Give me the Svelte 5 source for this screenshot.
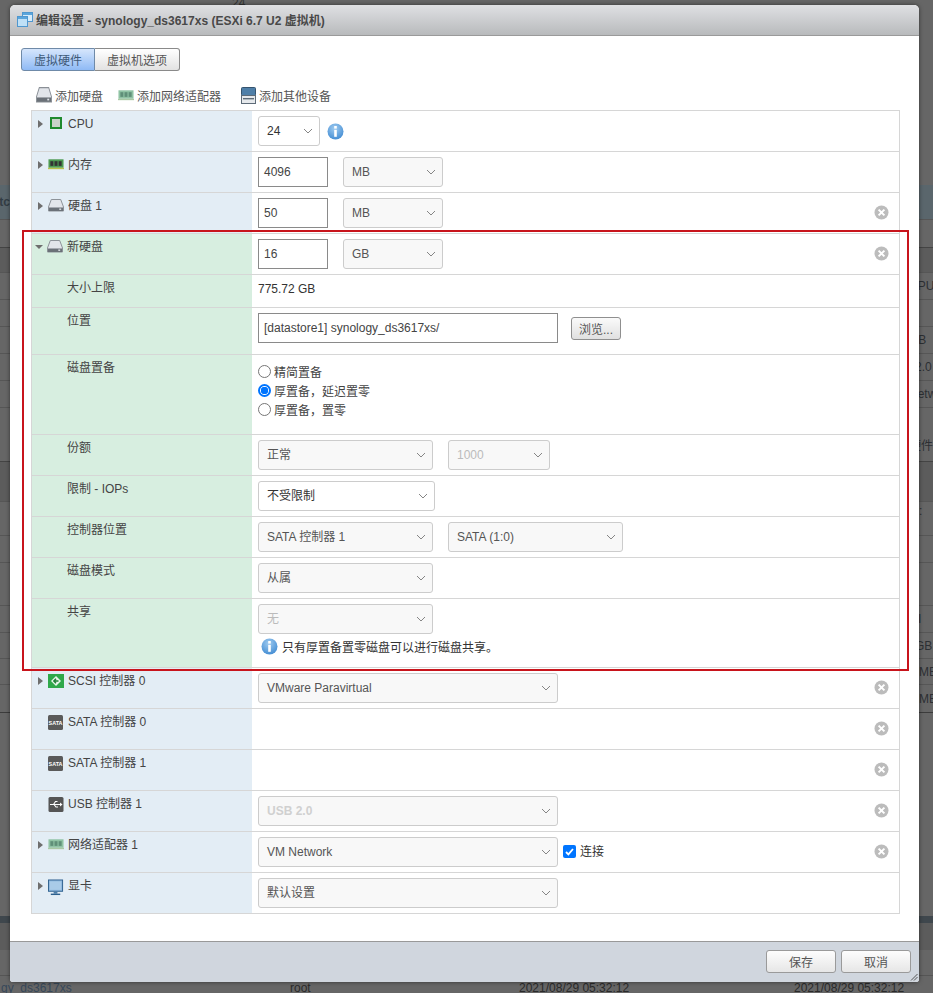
<script>
  const bgRows = [
    { h: 14, top: '24' },
    { h: 171 },
    { h: 34, l: 'ftc', cls: 'band' },
    { h: 28, cls: 'line' },
    { h: 25, cls: 'line dim' },
    { h: 27, r: 'CPU', cls: 'line' },
    { h: 27, cls: 'line' },
    { h: 27, r: 'IB', o: 6, cls: 'line' },
    { h: 27, r: '2.0', o: 6, cls: 'line' },
    { h: 27, r: 'Network', cls: 'line' },
    { h: 20, cls: 'line' },
    { h: 34, r: '硬件' },
    { h: 40, cls: 'line dim' },
    { h: 18, r: ':', o: 10, cls: 'line' },
    { h: 16 },
    { h: 27, cls: 'line' },
    { h: 43, cls: 'line' },
    { h: 27, r: 'I', o: 9, cls: 'line' },
    { h: 26, r: 'GB', o: 6, cls: 'line' },
    { h: 26, r: 'MB', o: 10, cls: 'line' },
    { h: 28, r: 'MB', o: 10, cls: 'line' },
    { h: 204, cls: 'line dark' },
    { h: 7, cls: 'strip' },
    { h: 27, cls: 'dim' },
    { h: 25 }
  ];

  const hw = ['添加硬盘', '添加网络适配器', '添加其他设备'];
</script>

{#snippet chev()}
  <svg class="chev" width="12" height="8" viewBox="0 0 12 8"><path d="M2 2l4 4 4-4" fill="none" stroke="#858585" stroke-width="1"/></svg>
{/snippet}

{#snippet sel(text, w, cls = '')}
  <span class="select {cls}" style="width:{w}px"><span>{text}</span>{@render chev()}</span>
{/snippet}

{#snippet info()}
  <svg width="17" height="17" viewBox="0 0 17 17">
    <defs><radialGradient id="ig" cx="45%" cy="30%" r="75%"><stop offset="0" stop-color="#9fcbf0"/><stop offset="1" stop-color="#3f8ad2"/></radialGradient></defs>
    <circle cx="8.5" cy="8.5" r="8" fill="url(#ig)"/>
    <rect x="7.2" y="3" width="2.6" height="2.6" fill="#fff"/>
    <rect x="7.2" y="6.8" width="2.6" height="7" fill="#fff"/>
  </svg>
{/snippet}

{#snippet close()}
  <svg class="close" width="15" height="15" viewBox="0 0 15 15">
    <circle cx="7.5" cy="7.5" r="7" fill="#bcbcbc"/>
    <path d="M4.6 4.6l5.8 5.8M10.4 4.6l-5.8 5.8" stroke="#fff" stroke-width="2"/>
  </svg>
{/snippet}

{#snippet disk()}
  <svg width="16" height="13" viewBox="0 0 17 13" preserveAspectRatio="none">
    <path d="M3.5.5h10L16.5 8v4h-16V8z" fill="#e2e5ea" stroke="#8a8f96"/>
    <rect x="1" y="8.5" width="15" height="3.5" fill="#6b7178"/>
    <rect x="12" y="9.5" width="2" height="1.4" fill="#dfe3e8"/>
  </svg>
{/snippet}

{#snippet ram(light)}
  <svg width="16" height="12" viewBox="0 0 17 12">
    <rect x=".5" y="1" width="16" height="9" fill={light ? '#8fc3a4' : '#4d9a52'}/>
    <rect x="0" y="10" width="17" height="1.5" fill={light ? '#a9c9a4' : '#b7c24a'}/>
    <rect x="2.5" y="3" width="3.2" height="5" fill={light ? '#5f8f78' : '#333'}/>
    <rect x="6.9" y="3" width="3.2" height="5" fill={light ? '#5f8f78' : '#333'}/>
    <rect x="11.3" y="3" width="3.2" height="5" fill={light ? '#5f8f78' : '#333'}/>
  </svg>
{/snippet}

{#snippet arrow(open = false)}
  <span class={open ? 'tri open' : 'tri'}></span>
{/snippet}

{#snippet sata()}
  <svg width="15" height="15" viewBox="0 0 15 15">
    <rect width="15" height="15" rx="1.5" fill="#5a5a5a"/>
    <text x="7.5" y="9.8" text-anchor="middle" font-size="5.4" font-weight="700" fill="#fff" font-family="Liberation Sans">SATA</text>
  </svg>
{/snippet}

<div class="page">
  <div class="backdrop">
    {#each bgRows as row}
      <div class="bg-row {row.cls ?? ''}" style="height:{row.h}px">
        {#if row.top}<span class="bg-top">{row.top}</span>{/if}
        <span class="bg-l">{row.l ?? ''}</span>
        <span class="bg-r" style="padding-left:{row.o ?? 0}px">{row.r ?? ''}</span>
      </div>
    {/each}
    <div class="bg-foot">
      <span class="a">gy_ds3617xs</span><span class="b">root</span><span class="c">2021/08/29 05:32:12</span><span class="d">2021/08/29 05:32:12</span>
    </div>
  </div>

  <div class="modal">
    <header class="head">
      <svg width="16" height="15" viewBox="0 0 16 15">
        <rect x="5.5" y=".5" width="10" height="9" fill="#d6ebfa" stroke="#4f97cf"/>
        <rect x=".5" y="4.5" width="10" height="10" fill="#bfe0f6" stroke="#4f97cf"/>
        <rect x="1" y="5" width="9" height="2" fill="#5aa5dc"/>
        <rect x="6" y="1" width="9" height="2" fill="#5aa5dc"/>
      </svg>
      <span>编辑设置 - synology_ds3617xs (ESXi 6.7 U2 虚拟机)</span>
    </header>

    <div class="body">
      <div class="tabs">
        <span class="tab on">虚拟硬件</span>
        <span class="tab">虚拟机选项</span>
      </div>

      <div class="tools">
        <span class="tool one">{@render disk()}{hw[0]}</span>
        <span class="tool two">{@render ram(true)}{hw[1]}</span>
        <span class="tool three">
          <svg width="15" height="17" viewBox="0 0 15 17">
            <rect x=".5" y=".5" width="14" height="8" rx="1" fill="#4f7fa8" stroke="#35536e"/>
            <rect x=".5" y="8.5" width="14" height="8" fill="#e6e9ec" stroke="#5d6b78"/>
            <rect x="2" y="11" width="11" height="1.4" fill="#5d6b78"/>
          </svg>
          {hw[2]}
        </span>
      </div>

      <div class="table">
        <div class="row"><div class="lab">{@render arrow()}
          <svg class="ico" width="12" height="12" viewBox="0 0 12 12"><rect x="1" y="1" width="10" height="10" fill="#c9d2c9" stroke="#1f8a2e" stroke-width="2"/></svg>
          <span class="cpu">CPU</span></div>
          <div class="val"><span class="select plain" style="width:62px"><span>24</span>{@render chev()}</span><span class="cpu-info">{@render info()}</span></div>
        </div>

        <div class="row"><div class="lab">{@render arrow()}<span class="ico">{@render ram(false)}</span>内存</div>
          <div class="val"><span class="input w70">4096</span>{@render sel('MB', 100)}</div>
        </div>

        <div class="row"><div class="lab">{@render arrow()}<span class="ico">{@render disk()}</span>硬盘 1</div>
          <div class="val"><span class="input w70">50</span>{@render sel('MB', 100)}{@render close()}</div>
        </div>

        <div class="row new"><div class="lab">{@render arrow(true)}<span class="ico">{@render disk()}</span>新硬盘</div>
          <div class="val"><span class="input w70">16</span>{@render sel('GB', 100)}{@render close()}</div>
        </div>

        <div class="row new h33"><div class="lab sub">大小上限</div>
          <div class="val text">775.72 GB</div>
        </div>

        <div class="row new h47"><div class="lab sub">位置</div>
          <div class="val"><span class="input w300">[datastore1] synology_ds3617xs/</span><span class="browse">浏览...</span></div>
        </div>

        <div class="row new h80"><div class="lab sub">磁盘置备</div>
          <div class="val radios">
            <label><span class="radio"></span>精简置备</label>
            <label><span class="radio on"></span>厚置备，延迟置零</label>
            <label><span class="radio"></span>厚置备，置零</label>
          </div>
        </div>

        <div class="row new"><div class="lab sub">份额</div>
          <div class="val">{@render sel('正常', 175, 'cjk')}{@render sel('1000', 102, 'off')}</div>
        </div>

        <div class="row new"><div class="lab sub">限制 - IOPs</div>
          <div class="val">{@render sel('不受限制', 177, 'plain cjk')}</div>
        </div>

        <div class="row new"><div class="lab sub">控制器位置</div>
          <div class="val">{@render sel('SATA 控制器 1', 175, 'cjk')}{@render sel('SATA (1:0)', 175)}</div>
        </div>

        <div class="row new"><div class="lab sub">磁盘模式</div>
          <div class="val">{@render sel('从属', 175, 'cjk')}</div>
        </div>

        <div class="row new h69"><div class="lab sub">共享</div>
          <div class="val column">
            {@render sel('无', 175, 'off cjk')}
            <div class="note">{@render info()}<span>只有厚置备置零磁盘可以进行磁盘共享。</span></div>
          </div>
        </div>

        <div class="row"><div class="lab">{@render arrow()}
          <svg class="ico" width="16" height="14" viewBox="0 0 16 14"><rect width="16" height="14" fill="#2fa84a"/><path d="M8 2l5 5-5 5-5-5z" fill="#e8f5ea"/><path d="M10.5 7H6M8 4.8 5.8 7 8 9.2" fill="none" stroke="#1e7f35" stroke-width="1.4"/></svg>
          SCSI 控制器 0</div>
          <div class="val">{@render sel('VMware Paravirtual', 300)}{@render close()}</div>
        </div>

        <div class="row"><div class="lab noarrow"><span class="ico">{@render sata()}</span>SATA 控制器 0</div>
          <div class="val">{@render close()}</div>
        </div>

        <div class="row"><div class="lab noarrow"><span class="ico">{@render sata()}</span>SATA 控制器 1</div>
          <div class="val">{@render close()}</div>
        </div>

        <div class="row"><div class="lab noarrow">
          <svg class="ico" width="15" height="15" viewBox="0 0 15 15"><rect width="15" height="15" rx="1.5" fill="#555"/><path d="M1.5 7.5h11M5 7.5l2-3h2M5.5 7.5l2 2.5h2" fill="none" stroke="#fff" stroke-width="1.1"/><path d="M11.5 5.5l2.5 2-2.5 2z" fill="#fff"/></svg>
          USB 控制器 1</div>
          <div class="val">{@render sel('USB 2.0', 300, 'off bold')}{@render close()}</div>
        </div>

        <div class="row"><div class="lab">{@render arrow()}<span class="ico">{@render ram(true)}</span>网络适配器 1</div>
          <div class="val">{@render sel('VM Network', 300)}<span class="check"><svg width="9" height="8" viewBox="0 0 9 8"><path d="M1 4l2.4 2.4L8 1" fill="none" stroke="#fff" stroke-width="1.8"/></svg></span><span class="conn">连接</span>{@render close()}</div>
        </div>

        <div class="row last"><div class="lab">{@render arrow()}
          <svg class="ico" width="17" height="17" viewBox="0 0 17 17"><rect x=".5" y=".5" width="15" height="12" fill="#8fb8de" stroke="#2c5f8d"/><rect x="2" y="2" width="12" height="9" fill="#a9cbe8"/><rect x="6" y="13" width="4" height="2" fill="#4b7da8"/><rect x="3" y="15" width="10" height="1.5" fill="#2c5f8d"/></svg>
          显卡</div>
          <div class="val">{@render sel('默认设置', 300, 'cjk')}</div>
        </div>
      </div>
    </div>

    <footer class="foot">
      <span class="btn">保存</span>
      <span class="btn">取消</span>
      <svg class="grip" width="8" height="8" viewBox="0 0 8 8"><path d="M7.5 1 1 7.5M7.5 4 4 7.5" stroke="#555" stroke-width="1"/></svg>
    </footer>
  </div>

  <div class="highlight"></div>
</div>

<style>
  :global(body) { margin: 0; background: #666; }
  .page { position: relative; width: 933px; height: 993px; overflow: hidden; font: 12px "Liberation Sans", "Noto Sans CJK SC", sans-serif; color: #444; }

  .backdrop { display: flex; flex-direction: column; height: 993px; background: #666; color: #2c2f33; font-size: 12px; }
  .bg-row { display: flex; align-items: center; justify-content: space-between; position: relative; box-sizing: border-box; flex: none; }
  .bg-row.band { background: #5a666c; color: #333d44; font-weight: 700; }
  .bg-row.line { border-top: 1px solid #565656; }
  .bg-row.dim { background: #5c5c5c; }
  .bg-row.line.dim { border-top-color: #444; }
  .bg-row.dark { border-top-color: #3c3c3c; }
  .bg-row.strip { background: #3f474d; }
  .bg-top { position: absolute; left: 232px; top: -4px; color: #333; }
  .bg-l { width: 10px; overflow: hidden; direction: rtl; }
  .bg-r { width: 24px; box-sizing: border-box; white-space: nowrap; overflow: hidden; }
  .bg-foot { display: grid; grid-template-columns: 290px 229px 275px 1fr; height: 18px; flex: none; box-sizing: border-box; align-items: center; padding-top: 5px; color: #2a2a2a; border-top: 1px solid #555; }
  .bg-foot .a { color: #37485a; margin-left: 1px; }

  .modal { position: absolute; left: 10px; top: 5px; width: 909px; height: 977px; display: flex; flex-direction: column; background: #fff; border-radius: 5px 5px 3px 3px; box-shadow: 0 0 4px rgba(0,0,0,.5); overflow: hidden; }
  .head { height: 31px; flex: none; box-sizing: border-box; display: flex; align-items: center; gap: 3px; padding: 0 0 2px 7px; background: linear-gradient(#dfe0e3, #b8babc); border-bottom: 1px solid #9a9a9a; font-weight: 700; color: #484848; }

  .body { flex: 1; padding: 12px 19px 0 11px; }
  .tabs { display: flex; height: 23px; }
  .tab { width: 85px; box-sizing: border-box; display: flex; align-items: center; justify-content: center; border: 1px solid #8a8a8a; border-left: 0; border-radius: 0 3px 3px 0; background: linear-gradient(#fff, #e2e2e2); color: #555; }
  .tab.on { width: 74px; border-left: 1px solid #6f8aa8; border-color: #6f8aa8; border-radius: 3px 0 0 3px; background: linear-gradient(#d6e6fc, #8fbaf5); color: #3e5a78; }

  .tools { display: flex; align-items: center; box-sizing: border-box; height: 39px; padding: 9px 0 0 15px; color: #555; }
  .tool { display: inline-flex; align-items: center; gap: 3px; }
  .tool.one svg { height: 16px; }
  .tool.two { margin-left: 15px; }
  .tool.three { margin-left: 20px; }

  .table { margin-left: 10px; border: 1px solid #d6d6d6; border-bottom: 0; width: 867px; }
  .row { display: flex; height: 41px; box-sizing: border-box; border-bottom: 1px solid #d6d6d6; }
  .row.h33 { height: 33px; }
  .row.h47 { height: 47px; }
  .row.h80 { height: 80px; }
  .row.h69 { height: 69px; }
  .lab { width: 220px; flex: none; box-sizing: border-box; background: #e3edf5; display: flex; align-items: flex-start; padding: 5px 0 0 5px; line-height: 16px; color: #444; }
  .new .lab { background: #d7eee0; }
  .lab.sub { padding-left: 35px; }
  .lab.noarrow { padding-left: 16px; }
  .tri { width: 0; height: 0; margin: 4px 5px 0 1px; border-left: 5px solid #6e6e6e; border-top: 4px solid transparent; border-bottom: 4px solid transparent; flex: none; }
  .tri.open { margin: 6px 4px 0 -2px; border-top: 4px solid #6e6e6e; border-left: 4px solid transparent; border-right: 4px solid transparent; border-bottom: 0; }
  .ico { display: inline-flex; flex: none; width: 16px; margin-right: 4px; margin-top: 1px; }

  .val { flex: 1; display: flex; align-items: flex-start; padding: 5px 10px 0 6px; gap: 15px; position: relative; min-width: 0; color: #333; }
  .val.text { padding-top: 6px; line-height: 16px; }
  .val.column { flex-direction: column; gap: 3px; }

  .select { display: flex; align-items: center; justify-content: space-between; flex: none; box-sizing: border-box; height: 30px; padding: 0 5px 0 8px; background: #f8f8f8; border: 1px solid #ccc; border-radius: 3px; color: #555; }
  .select.plain { background: #fff; color: #333; }
  .select.off { background: #f8f8f8; color: #bbb; }
  .select.bold { font-weight: 700; color: #d0d0d0; }
  .select.cjk span { padding-bottom: 3px; }
  .chev { flex: none; }

  .input { flex: none; box-sizing: border-box; height: 30px; display: flex; align-items: center; padding: 0 5px; background: #fff; border: 1px solid #8a8a8a; color: #444; }
  .w70 { width: 70px; }
  .w300 { width: 300px; }
  .cpu-info { margin: 7px 0 0 -8px; display: inline-flex; }

  .browse { margin: 4px 0 0 -2px; width: 50px; height: 23px; box-sizing: border-box; display: flex; align-items: center; justify-content: center; border: 1px solid #8f8f8f; border-radius: 3px; background: linear-gradient(#fafafa, #e0e0e0); color: #555; }

  .radios { flex-direction: column; gap: 3px; padding-top: 8px; }
  .radios label { display: flex; align-items: center; gap: 3px; height: 16px; color: #444; }
  .radio { width: 13px; height: 13px; box-sizing: border-box; border: 1px solid #767676; border-radius: 50%; background: #fff; }
  .radio.on { border: 2px solid #0075ff; background: radial-gradient(circle, #0075ff 0 3.5px, #fff 4px); }

  .note { display: flex; align-items: center; gap: 4px; padding-left: 3px; color: #333; margin-top: 1px; }

  .check { margin: 8px 0 0 -10px; width: 13px; height: 13px; border-radius: 2px; background: #0075ff; display: inline-flex; align-items: center; justify-content: center; flex: none; }
  .conn { margin: 7px 0 0 -11px; line-height: 16px; }
  .close { position: absolute; right: 10px; top: 12px; }

  .foot { height: 41px; flex: none; box-sizing: border-box; position: relative; display: flex; justify-content: flex-end; gap: 5px; padding: 8px 8px 0 0; background: #d0d6de; border-top: 1px solid #999; }
  .btn { width: 70px; height: 23px; box-sizing: border-box; display: flex; align-items: center; justify-content: center; border: 1px solid #9a9a9a; border-radius: 3px; background: linear-gradient(#fdfdfd, #e6e6e6); color: #555; }
  .grip { position: absolute; right: 1px; bottom: 1px; }

  .highlight { position: absolute; left: 22px; top: 230px; width: 887px; height: 441px; box-sizing: border-box; border: 2px solid #c8141c; pointer-events: none; }
</style>
